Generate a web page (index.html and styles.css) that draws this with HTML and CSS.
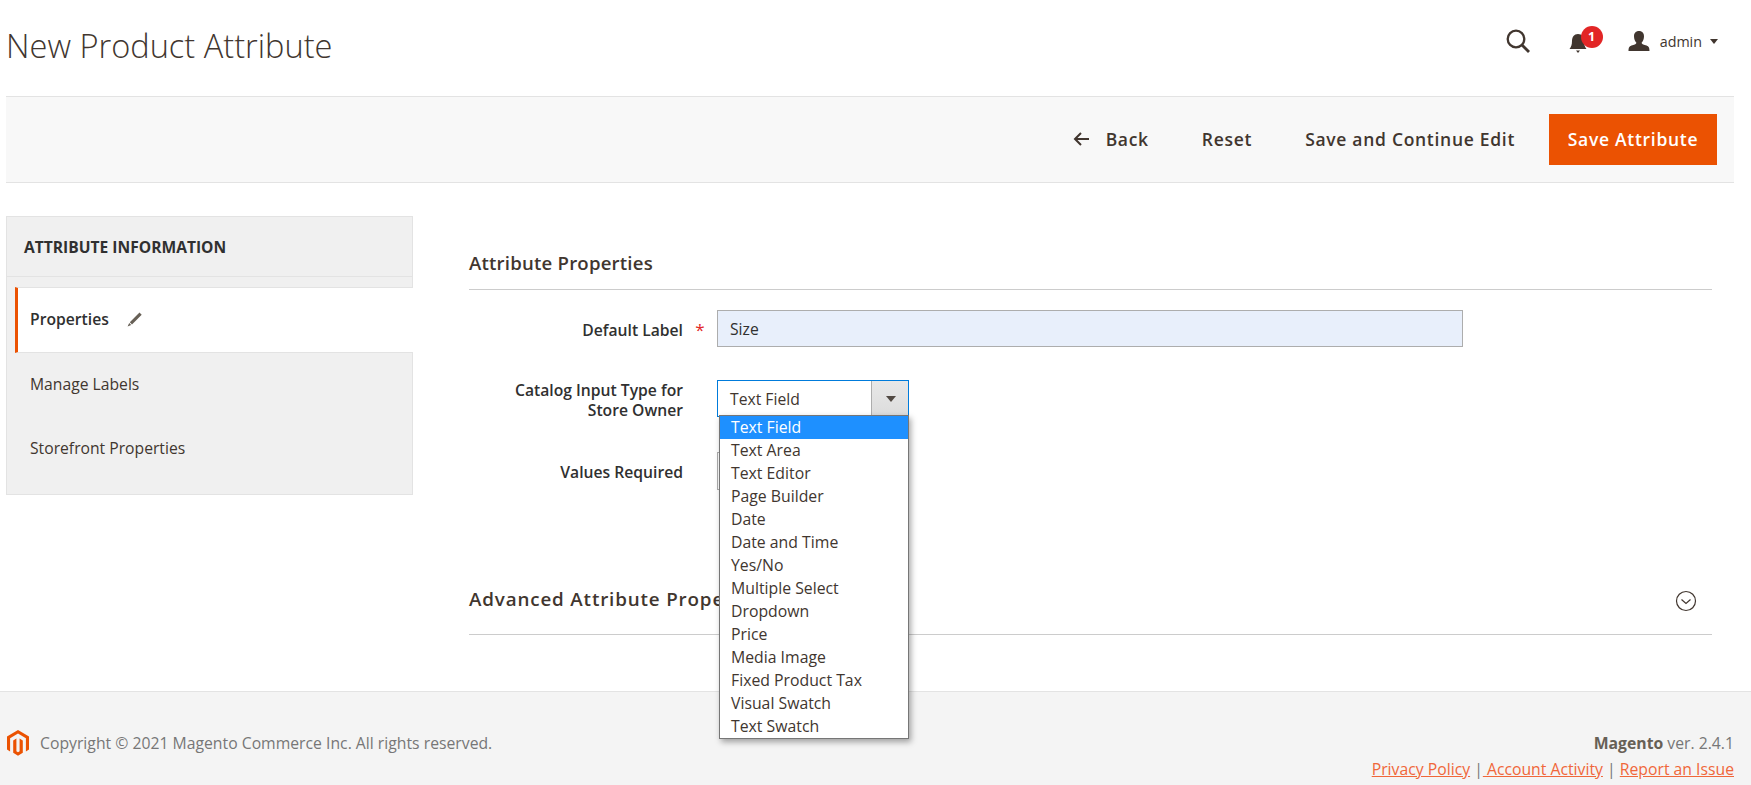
FILE: index.html
```html
<!DOCTYPE html>
<html lang="en">
<head>
    <meta charset="UTF-8">
    <title>New Product Attribute</title>
    <link rel="stylesheet" href="styles.css">
</head>
<body>
    <header class="page-header">
        <h1 class="page-title">New Product Attribute</h1>
        <div class="header-tools">
            <svg class="icon-search" width="24" height="24" viewBox="0 0 24 24"><circle cx="10" cy="10" r="8.300" fill="none" stroke="#41362f" stroke-width="2.300"/><path d="M16 16l7 7" stroke="#41362f" stroke-width="2.800" fill="none"/></svg>
            <div class="notifications">
                <svg width="20" height="24" viewBox="0 0 20 24"><path d="M9 3c-4 0-6 3-6 7 0 4-1 6-2.500 8h17c-1.500-2-2.500-4-2.500-8 0-4-2-7-6-7zM7 19.500h4L9 22z" fill="#41362f"/></svg>
                <span class="badge">1</span>
            </div>
            <div class="user-menu">
                <svg width="22" height="20" viewBox="0 0 22 20"><path d="M11 0c3.200 0 5 2.200 5 5.200 0 2.800-1 5-2.400 6.500 0 1.300 1.600 1.700 4 2.500 2.700.9 3.900 1.600 3.900 5.800H.5c0-4.200 1.200-4.900 3.900-5.800 2.400-.8 4-1.200 4-2.500C7 10.200 6 8 6 5.200 6 2.200 7.800 0 11 0z" fill="#41362f"/></svg>
                <span class="user-name">admin</span>
                <span class="caret"></span>
            </div>
        </div>
    </header>

    <div class="actions-bar">
        <a class="action action-back">
            <svg width="16" height="14" viewBox="0 0 16 14"><path d="M16 7H2M8 1L2 7l6 6" fill="none" stroke="#41362f" stroke-width="2"/></svg>
            Back
        </a>
        <a class="action">Reset</a>
        <a class="action action-last">Save and Continue Edit</a>
        <a class="action-primary">Save Attribute</a>
    </div>

    <div class="page-columns">
        <aside class="sidebar">
            <div class="sidebar-title">ATTRIBUTE INFORMATION</div>
            <div class="sidebar-spacer"></div>
            <div class="tab tab-active">
                Properties
                <svg width="16" height="16" viewBox="0 0 16 16"><path d="M12.500 1.500l2.200 2.200L5 13.400 2.800 11.200zM2.200 12l2 2L.6 15.500z" fill="#676056"/></svg>
            </div>
            <div class="tab">Manage Labels</div>
            <div class="tab">Storefront Properties</div>
        </aside>

        <main class="main">
            <h2 class="section-title">Attribute Properties</h2>
            <div class="form-row form-row-first">
                <label class="form-label">Default Label</label>
                <span class="required">*</span>
                <input class="text-input" type="text" value="Size">
            </div>
            <div class="form-row form-row-tall">
                <label class="form-label form-label-tall">Catalog Input Type for<br>Store Owner</label>
                <span></span>
                <div class="select-wrap">
                    <div class="select select-open">
                        <span class="select-value">Text Field</span>
                        <span class="select-arrow"></span>
                    </div>
                    <ul class="select-menu">
                        <li class="option-selected">Text Field</li>
                        <li>Text Area</li>
                        <li>Text Editor</li>
                        <li>Page Builder</li>
                        <li>Date</li>
                        <li>Date and Time</li>
                        <li>Yes/No</li>
                        <li>Multiple Select</li>
                        <li>Dropdown</li>
                        <li>Price</li>
                        <li>Media Image</li>
                        <li>Fixed Product Tax</li>
                        <li>Visual Swatch</li>
                        <li>Text Swatch</li>
                    </ul>
                </div>
            </div>
            <div class="form-row">
                <label class="form-label">Values Required</label>
                <span></span>
                <div class="select select-plain"></div>
            </div>
            <div class="section-collapsed">
                <h2 class="section-title-large">Advanced Attribute Properties</h2>
                <svg width="22" height="22" viewBox="0 0 22 22"><circle cx="11" cy="11" r="9.500" fill="none" stroke="#41362f" stroke-width="1.200"/><path d="M6.500 9.500L11 13.500l4.500-4" fill="none" stroke="#41362f" stroke-width="1.200"/></svg>
            </div>
        </main>
    </div>

    <footer class="page-footer">
        <div class="copyright">
            <svg width="22" height="26" viewBox="0 0 22 26"><path d="M11 0l11 6.400v13.200l-3.100 1.800V8.200L11 3.600 3.100 8.200v13.200L0 19.600V6.400z" fill="#eb5202"/><path d="M9.400 8.600L6.200 10.400v12.400l4.800 2.900 4.800-2.900V10.400l-3.200-1.800v12.600L11 22.200l-1.600-1z" fill="#eb5202"/></svg>
            <span>Copyright © 2021 Magento Commerce Inc. All rights reserved.</span>
        </div>
        <div class="footer-right">
            <div class="version"><strong>Magento</strong> ver. 2.4.1</div>
            <div class="footer-links"><a>Privacy Policy</a> |<a> Account Activity</a> | <a>Report an Issue</a></div>
        </div>
    </footer>
</body>
</html>
```

FILE: styles.css
```css
* {
    box-sizing: border-box;
}
html, body {
    height: 785px;
    overflow: hidden;
}
body {
    margin: 0;
    display: flex;
    flex-direction: column;
    font-family: "Open Sans", sans-serif;
    font-size: 15.7px;
    color: #41362f;
    background: #fff;
}

/* header */
.page-header {
    height: 96px;
    display: flex;
    align-items: center;
    justify-content: space-between;
    padding: 0 33px 0 6px;
}
.page-title {
    margin: 0 0 6px;
    font-size: 32.6px;
    font-weight: 300;
    color: #41362f;
}
.header-tools {
    display: flex;
    align-items: center;
    margin-bottom: 14px;
}
.icon-search {
    margin-right: 39px;
}
.notifications {
    position: relative;
    width: 20px;
    height: 24px;
    margin-right: 39px;
    margin-top: 4px;
}
.badge {
    position: absolute;
    left: 12px;
    top: -5px;
    width: 22px;
    height: 22px;
    border-radius: 50%;
    background: #e22626;
    color: #fff;
    font-size: 12.5px;
    font-weight: 700;
    line-height: 22px;
    text-align: center;
}
.user-menu {
    display: flex;
    align-items: center;
}
.user-name {
    margin-left: 10px;
    font-size: 14.3px;
}
.caret {
    margin-left: 8px;
    border: 4.5px solid transparent;
    border-top: 5px solid #41362f;
    border-bottom: 0;
}

/* action bar */
.actions-bar {
    height: 87px;
    margin: 0 17px 0 6px;
    display: flex;
    align-items: center;
    justify-content: flex-end;
    background: #f8f8f8;
    border-top: 1px solid #e3e3e3;
    border-bottom: 1px solid #e3e3e3;
}
.action {
    display: flex;
    align-items: center;
    margin-right: 53px;
    padding-bottom: 2px;
    font-size: 17.5px;
    font-weight: 600;
    letter-spacing: .7px;
    color: #41362f;
}
.action-last {
    margin-right: 34px;
}
.action svg {
    margin-right: 17px;
}
.action-primary {
    width: 168px;
    height: 51px;
    line-height: 51px;
    margin-right: 17px;
    text-align: center;
    background: #eb5202;
    color: #fff;
    font-size: 17.5px;
    font-weight: 600;
    letter-spacing: .7px;
}

/* columns */
.page-columns {
    flex: 1;
    display: flex;
    padding: 33px 39px 0 6px;
    gap: 56px;
}
.sidebar {
    width: 407px;
    height: 279px;
    background: #f0f0f0;
    border: 1px solid #e3e3e3;
}
.sidebar-title {
    height: 60px;
    padding: 0 17px;
    line-height: 60px;
    font-size: 15.6px;
    font-weight: 700;
    color: #303030;
    border-bottom: 1px solid #e3e3e3;
}
.sidebar-spacer {
    height: 10px;
}
.tab {
    height: 64px;
    display: flex;
    align-items: center;
    padding: 0 0 2px 23px;
    font-size: 15.7px;
    color: #41362f;
}
.tab-active {
    height: 66px;
    margin-left: 8px;
    margin-right: -1px;
    padding-left: 12px;
    background: #fff;
    border-left: 3px solid #eb5202;
    border-top: 1px solid #e3e3e3;
    border-bottom: 1px solid #e3e3e3;
    font-weight: 600;
    color: #303030;
}
.tab-active svg {
    margin-left: 18px;
}

/* form */
.main {
    flex: 1;
}
.section-title {
    margin: 0;
    height: 74px;
    padding-top: 32px;
    border-bottom: 1px solid #cccccc;
    font-size: 18.6px;
    line-height: 30px;
    font-weight: 600;
    letter-spacing: .2px;
    color: #41362f;
}
.form-row {
    display: grid;
    grid-template-columns: 214px 34px 1fr;
    margin-bottom: 33px;
}
.form-row-first {
    margin-top: 20px;
}
.form-row-tall {
    margin-bottom: 32px;
}
.form-label {
    text-align: right;
    font-weight: 600;
    font-size: 15.7px;
    line-height: 20px;
    padding-top: 10px;
    color: #303030;
}
.form-label-tall {
    padding-top: 0;
}
.required {
    height: 37px;
    text-align: center;
    color: #e22626;
    font-size: 17px;
    line-height: 40px;
}
.text-input {
    width: 746px;
    height: 37px;
    padding: 0 12px;
    border: 1px solid #adadad;
    background: #e8effb;
    font-family: inherit;
    font-size: 15.7px;
    color: #303030;
    border-radius: 0;
    outline: 0;
}
.select-wrap {
    position: relative;
    width: 192px;
}
.select {
    display: flex;
    justify-content: space-between;
    width: 192px;
    height: 37px;
    border: 1px solid #adadad;
    background: #fff;
}
.select-open {
    border-color: #007bdb;
}
.select-plain {
    width: 150px;
    height: 38px;
}
.select-value {
    padding-left: 12px;
    line-height: 37px;
    font-size: 15.7px;
}
.select-arrow {
    position: relative;
    width: 37px;
    background: linear-gradient(#e8e8e8, #dcdcdc);
    border-left: 1px solid #adadad;
}
.select-arrow::after {
    content: "";
    position: absolute;
    left: 14px;
    top: 15px;
    border: 5px solid transparent;
    border-top: 6px solid #514943;
    border-bottom: 0;
}
.select-menu {
    position: absolute;
    z-index: 10;
    left: 2px;
    top: 35px;
    width: 190px;
    margin: 0;
    padding: 0;
    list-style: none;
    background: #fff;
    border: 1px solid #767676;
    box-shadow: 2px 3px 6px rgba(0, 0, 0, .35);
}
.select-menu li {
    height: 23px;
    padding-left: 11px;
    font-size: 15.8px;
    line-height: 22px;
    color: #41362f;
}
.select-menu .option-selected {
    background: #1e90ff;
    color: #fff;
}
.section-collapsed {
    display: flex;
    align-items: center;
    justify-content: space-between;
    height: 70px;
    margin-top: 75px;
    padding: 0 15px 2px 0;
    border-bottom: 1px solid #cccccc;
}
.section-collapsed svg {
    margin-top: 4px;
}
.section-title-large {
    margin: 0;
    font-size: 18.8px;
    font-weight: 600;
    letter-spacing: .85px;
    color: #41362f;
}

/* footer */
.page-footer {
    height: 94px;
    display: flex;
    justify-content: space-between;
    padding: 38px 17px 0 7px;
    background: #f4f4f4;
    border-top: 1px solid #e3e3e3;
    font-size: 15.75px;
    color: #777;
}
.copyright {
    display: flex;
    align-items: flex-start;
    gap: 11px;
}
.copyright span {
    line-height: 26px;
}
.footer-right {
    text-align: right;
    line-height: 26px;
}
.version strong {
    color: #676056;
}
.footer-links a {
    color: #f0673a;
    text-decoration: underline;
}
```
